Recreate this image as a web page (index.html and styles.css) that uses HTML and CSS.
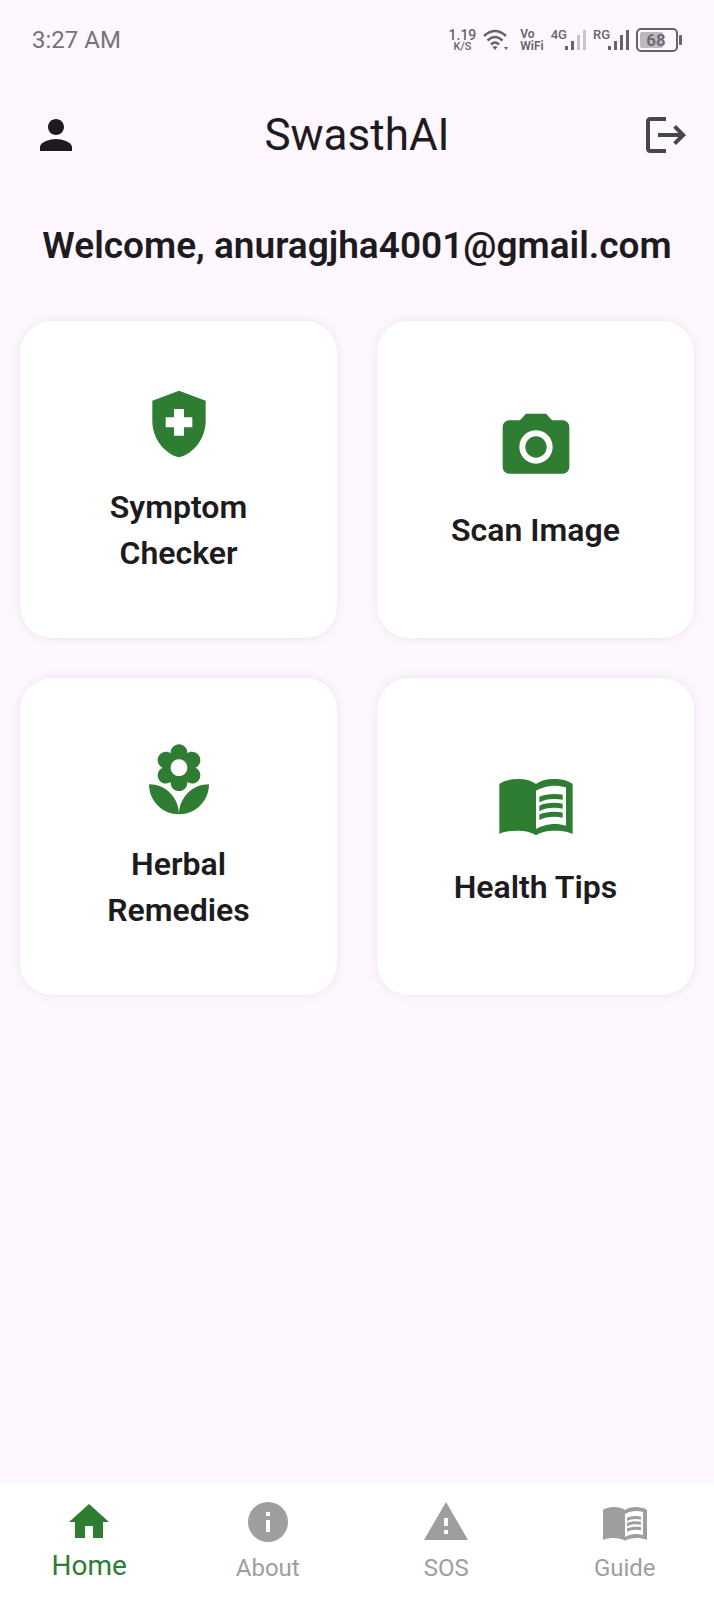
FILE: index.html
```html
<!DOCTYPE html>
<html lang="en">
<head>
<meta charset="UTF-8">
<meta name="viewport" content="width=device-width, initial-scale=1">
<title>SwasthAI</title>
<link rel="stylesheet" href="styles.css">
</head>
<body>
<svg class="sprite" aria-hidden="true">
  <symbol id="icon-book" viewBox="0 0 24 24">
    <path fill-rule="evenodd" d="M17.5 4.5c-1.95 0-4.05.4-5.5 1.5-1.45-1.1-3.55-1.5-5.5-1.5S2.45 4.9 1 6v15c1.45-.8 3.6-1 5.5-1s4.15.4 5.5 1.4c1.35-1 3.6-1.4 5.5-1.4s4.15.2 5.5 1V6c-1.45-1.1-3.55-1.5-5.5-1.5zM21 18.5c-1.1-.35-2.3-.5-3.5-.5-1.7 0-4.15.65-5.5 1.5V8c1.35-.85 3.8-1.5 5.5-1.5 1.2 0 2.4.15 3.5.5z"/>
    <path d="M17.5 10.5c.88 0 1.73.09 2.5.26V9.24c-.79-.15-1.64-.24-2.5-.24-1.7 0-3.24.29-4.5.83v1.66c1.13-.64 2.7-.99 4.5-.99zM13 12.49v1.66c1.13-.64 2.7-.99 4.5-.99.88 0 1.73.09 2.5.26V11.9c-.79-.15-1.64-.24-2.5-.24-1.7 0-3.24.3-4.5.83zM17.5 14.33c-1.7 0-3.24.29-4.5.83v1.66c1.13-.64 2.7-.99 4.5-.99.88 0 1.73.09 2.5.26v-1.52c-.79-.16-1.64-.24-2.5-.24z"/>
  </symbol>
</svg>

<div class="status">
  <span class="time">3:27 AM</span>
  <div class="indicators">
    <div class="speed"><span>1.19</span><small>K/S</small></div>
    <svg class="wifi" width="26" height="22" viewBox="0 0 26 22">
      <g fill="none" stroke="currentColor" stroke-width="2.5">
        <path d="M1 7Q12 -3 23 7"/>
        <path d="M4.5 11.500Q12 4.500 19.500 11.500"/>
        <path d="M8 15.500Q12 11.500 16 15.500"/>
      </g>
      <path fill="currentColor" d="M9.500 18Q12 16 14.500 18L12 21zM21 18h4l-2 3z"/>
    </svg>
    <div class="vowifi">Vo<br>WiFi</div>
    <div class="signal">
      <span>4G</span>
      <svg width="21" height="22" viewBox="0 0 21 22" fill="currentColor">
        <path d="M0 17h3v4H0zM6 12h3v9H6z"/>
        <path opacity=".35" d="M12 6h3v15h-3zM18 1h3v20h-3z"/>
      </svg>
    </div>
    <div class="signal">
      <span>RG</span>
      <svg width="21" height="22" viewBox="0 0 21 22" fill="currentColor">
        <path d="M0 17h3v4H0zM6 12h3v9H6zM12 6h3v15h-3zM18 1h3v20h-3z"/>
      </svg>
    </div>
    <svg class="battery" width="46" height="24" viewBox="0 0 46 24">
      <rect x="1" y="1" width="40" height="22" rx="4" fill="none" stroke="currentColor" stroke-width="2"/>
      <rect x="4" y="4" width="23" height="16" rx="2" fill="#bcb8bf"/>
      <rect x="43" y="7" width="3" height="10" rx="1" fill="currentColor"/>
      <text x="20" y="18" text-anchor="middle" fill="currentColor">68</text>
    </svg>
  </div>
</div>

<header class="appbar">
  <button type="button" class="profile" aria-label="Profile">
    <svg class="icon" viewBox="0 0 24 24"><path d="M12 12c2.210 0 4-1.790 4-4s-1.790-4-4-4-4 1.790-4 4 1.790 4 4 4zm0 2c-2.670 0-8 1.340-8 4v2h16v-2c0-2.660-5.330-4-8-4z"/></svg>
  </button>
  <h1>SwasthAI</h1>
  <button type="button" class="logout" aria-label="Log out">
    <svg class="icon" viewBox="0 0 24 24"><path d="M17 7l-1.410 1.410L18.170 11H8v2h10.170l-2.580 2.580L17 17l5-5zM4 5h8V3H4c-1.100 0-2 .9-2 2v14c0 1.100.9 2 2 2h8v-2H4z"/></svg>
  </button>
</header>

<main>
  <h2 class="welcome">Welcome, anuragjha4001@gmail.com</h2>
  <div class="cards">
    <a class="card" href="#symptoms">
      <svg viewBox="0 0 24 24"><path fill-rule="evenodd" d="M12 2L4 5v6.090c0 5.050 3.410 9.760 8 10.910 4.590-1.150 8-5.860 8-10.910V5zM10.500 13H8v-3h2.500V7.500h3V10H16v3h-2.500v2.500h-3z"/></svg>
      <span>Symptom<br>Checker</span>
    </a>
    <a class="card" href="#scan">
      <svg viewBox="0 0 24 24">
        <circle cx="12" cy="12" r="3.200"/>
        <path fill-rule="evenodd" d="M9 2L7.170 4H4c-1.100 0-2 .9-2 2v12c0 1.100.9 2 2 2h16c1.100 0 2-.9 2-2V6c0-1.100-.9-2-2-2h-3.170L15 2zm3 15c-2.760 0-5-2.240-5-5s2.240-5 5-5 5 2.240 5 5-2.240 5-5 5z"/>
      </svg>
      <span>Scan Image</span>
    </a>
    <a class="card" href="#herbal">
      <svg viewBox="0 0 24 24"><path fill-rule="evenodd" d="M12 22c4.970 0 9-4.030 9-9-4.970 0-9 4.030-9 9zM5.600 10.250c0 1.380 1.120 2.500 2.500 2.500.53 0 1.010-.16 1.420-.44l-.02.19c0 1.380 1.120 2.500 2.500 2.500s2.500-1.120 2.500-2.500l-.02-.19c.4.28.89.44 1.420.44 1.380 0 2.500-1.120 2.500-2.500 0-1-.59-1.850-1.430-2.250.84-.4 1.430-1.250 1.430-2.250 0-1.380-1.120-2.500-2.500-2.500-.53 0-1.010.16-1.420.44l.02-.19C14.500 2.120 13.380 1 12 1S9.500 2.120 9.500 3.500l.02.19c-.4-.28-.89-.44-1.420-.44-1.380 0-2.500 1.120-2.500 2.500 0 1 .59 1.850 1.430 2.250-.84.4-1.430 1.250-1.430 2.250zM12 5.500c1.380 0 2.500 1.120 2.500 2.500s-1.120 2.500-2.500 2.500S9.500 9.380 9.500 8s1.120-2.500 2.500-2.500zM3 13c0 4.970 4.030 9 9 9 0-4.970-4.030-9-9-9z"/></svg>
      <span>Herbal<br>Remedies</span>
    </a>
    <a class="card" href="#tips">
      <svg><use href="#icon-book"/></svg>
      <span>Health Tips</span>
    </a>
  </div>
</main>

<nav class="tabs">
  <a class="active" href="#home">
    <svg class="icon" viewBox="0 0 24 24"><path d="M10 20v-6h4v6h5v-8h3L12 3 2 12h3v8z"/></svg>
    <span>Home</span>
  </a>
  <a href="#about">
    <svg class="icon" viewBox="0 0 24 24"><path fill-rule="evenodd" d="M12 2a10 10 0 1 0 0 20 10 10 0 0 0 0-20zm1 15h-2v-6h2zm0-8h-2V7h2z"/></svg>
    <span>About</span>
  </a>
  <a href="#sos">
    <svg class="icon" viewBox="0 0 24 24"><path fill-rule="evenodd" d="M1 21h22L12 2zm12-3h-2v-2h2zm0-4h-2v-4h2z"/></svg>
    <span>SOS</span>
  </a>
  <a href="#guide">
    <svg class="icon"><use href="#icon-book"/></svg>
    <span>Guide</span>
  </a>
</nav>
</body>
</html>
```
FILE: styles.css
```css
* {
  box-sizing: border-box;
  margin: 0;
  padding: 0;
}

body {
  display: flex;
  flex-direction: column;
  min-height: 100vh;
  background: #fef7ff;
  color: #1d1b20;
  font-family: Roboto, "Liberation Sans", sans-serif;
}

a {
  color: inherit;
  text-decoration: none;
}

svg {
  display: block;
  flex: none;
}

.sprite {
  position: absolute;
  width: 0;
  height: 0;
}

.icon {
  width: 48px;
  height: 48px;
  fill: currentColor;
}

/* status bar */
.status {
  display: flex;
  align-items: center;
  justify-content: space-between;
  height: 80px;
  padding: 0 32px;
  color: #777279;
}

.time {
  font-size: 24px;
}

.indicators {
  display: flex;
  align-items: center;
  gap: 7px;
  color: #68636b;
}

.speed {
  display: flex;
  flex-direction: column;
  align-items: center;
  font-size: 14px;
  font-weight: 500;
  line-height: 12px;
}

.speed small {
  font-size: 11px;
  line-height: 11px;
}

.vowifi {
  margin-left: 4px;
  font-size: 12px;
  font-weight: 600;
  line-height: 12px;
}

.signal {
  display: flex;
  font-size: 13px;
  font-weight: 500;
  line-height: 12px;
}

/* the bars tuck in under the network label */
.signal svg {
  margin-left: -2px;
}

.battery {
  font-size: 17px;
  font-weight: 500;
}

/* app bar */
.appbar {
  display: grid;
  grid-template-columns: 1fr auto 1fr;
  align-items: center;
  height: 110px;
  padding: 0 24px;
}

.appbar h1 {
  font-size: 44px;
  font-weight: 400;
}

.appbar button {
  border: 0;
  background: none;
}

.appbar .profile {
  justify-self: start;
  padding-left: 8px;
  color: #1d1b20;
}

.appbar .logout {
  justify-self: end;
  color: #49454f;
}

main {
  flex: 1;
}

.welcome {
  padding: 33px 20px 52px;
  font-size: 37px;
  font-weight: 600;
  line-height: 46px;
  text-align: center;
}

.cards {
  display: grid;
  grid-template-columns: 1fr 1fr;
  gap: 40px;
  padding: 0 20px;
}

.card {
  display: flex;
  flex-direction: column;
  align-items: center;
  justify-content: center;
  gap: 20px;
  aspect-ratio: 1;
  border-radius: 32px;
  background: #fff;
  box-shadow: 0 0 12px rgba(0, 0, 0, .08);
  font-size: 32px;
  font-weight: 600;
  line-height: 46px;
  text-align: center;
}

.card svg {
  width: 80px;
  height: 80px;
  fill: #2e7d32;
}

/* bottom tabs */
.tabs {
  display: grid;
  grid-template-columns: repeat(4, 1fr);
  height: 116px;
  padding-top: 15px;
  background: #fff;
  box-shadow: 0 0 4px rgba(0, 0, 0, .04);
  color: #9e9e9e;
  font-size: 24px;
  line-height: 44px;
}

.tabs a {
  display: flex;
  flex-direction: column;
  align-items: center;
}

.tabs .active {
  color: #2e7d32;
  font-size: 28px;
  line-height: 40px;
}
```
